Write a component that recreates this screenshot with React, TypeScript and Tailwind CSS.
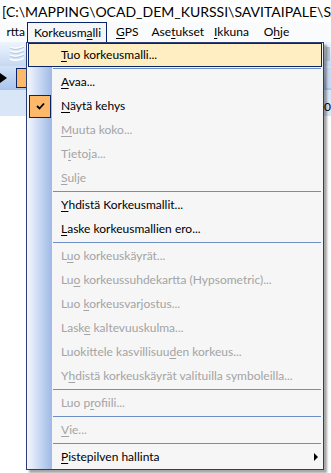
import React from 'react';

type MenuItem =
  | { sep: true }
  | {
      sep?: false;
      label: string;
      u: number;
      disabled?: boolean;
      checked?: boolean;
      active?: boolean;
      submenu?: boolean;
    };

const items: MenuItem[] = [
  { label: 'Tuo korkeusmalli...', u: 0, active: true },
  { sep: true },
  { label: 'Avaa...', u: 0 },
  { label: 'Näytä kehys', u: 0, checked: true },
  { label: 'Muuta koko...', u: 0, disabled: true },
  { label: 'Tietoja...', u: 1, disabled: true },
  { label: 'Sulje', u: 0, disabled: true },
  { sep: true },
  { label: 'Yhdistä Korkeusmallit...', u: 0 },
  { label: 'Laske korkeusmallien ero...', u: 0 },
  { sep: true },
  { label: 'Luo korkeuskäyrät...', u: 1, disabled: true },
  { label: 'Luo korkeussuhdekartta (Hypsometric)...', u: 2, disabled: true },
  { label: 'Luo korkeusvarjostus...', u: 4, disabled: true },
  { label: 'Laske kaltevuuskulma...', u: 4, disabled: true },
  { label: 'Luokittele kasvillisuuden korkeus...', u: 22, disabled: true },
  { label: 'Yhdistä korkeuskäyrät valituilla symboleilla...', u: 1, disabled: true },
  { sep: true },
  { label: 'Luo profiili...', u: 5, disabled: true },
  { sep: true },
  { label: 'Vie...', u: 0, disabled: true },
  { sep: true },
  { label: 'Pistepilven hallinta', u: 0, submenu: true },
];

// underline the access key letter
function Mnemonic({ text, u }: { text: string; u: number }) {
  return (
    <span>
      {text.slice(0, u)}
      <span className="underline decoration-1 underline-offset-[2px]">{text.charAt(u)}</span>
      {text.slice(u + 1)}
    </span>
  );
}

function MenuRow({ item }: { item: Exclude<MenuItem, { sep: true }> }) {
  if (item.active) {
    return (
      <div className="ml-[1px] mr-[1px] flex h-[24px] items-center border border-[#0a246a] bg-[#ffeec2] pl-[32px] text-black">
        <Mnemonic text={item.label} u={item.u} />
      </div>
    );
  }
  return (
    <div className={`flex h-[24px] items-center ${item.disabled ? 'text-[#a4a4a4]' : 'text-black'}`}>
      <div className="flex h-[24px] w-[34px] shrink-0 items-center">
        {item.checked && (
          <div className="ml-[2px] flex h-[23px] w-[22px] items-center justify-center border border-[#0a246a] bg-[#fdb86a]">
            <svg width="9" height="8" viewBox="0 0 9 8">
              <path d="M1 4 L3.5 6.5 L8 1.5" fill="none" stroke="#000" strokeWidth="1.8" />
            </svg>
          </div>
        )}
      </div>
      <Mnemonic text={item.label} u={item.u} />
      {item.submenu && (
        <div className="ml-auto mr-[5px] h-0 w-0 border-y-[4px] border-l-[4px] border-y-transparent border-l-black" />
      )}
    </div>
  );
}

export default function App() {
  return (
    <div
      className="relative h-[473px] w-[331px] overflow-hidden bg-white text-[12px]"
      style={{ fontFamily: 'Lato, "Open Sans", sans-serif' }}
    >
      {/* title bar */}
      <div className="flex h-[22px] items-center whitespace-nowrap pl-[2px] text-[14px] text-black">
        [C:\MAPPING\OCAD_DEM_KURSSI\SAVITAIPALE\SAVITAIPALE.ocd
      </div>

      {/* menu bar */}
      <div className="flex h-[20px] items-stretch whitespace-nowrap bg-[#fafbfd] text-black">
        <div className="flex w-[27px] items-center justify-end pr-[2px]">rtta</div>
        <div className="flex w-[80px] items-center border-x border-t border-[#0a246a] bg-[#f6f6f6] pl-[6px]">
          <Mnemonic text="Korkeusmalli" u={8} />
        </div>
        <div className="flex items-center pl-[9px]">
          <Mnemonic text="GPS" u={0} />
        </div>
        <div className="flex items-center pl-[13px]">
          <Mnemonic text="Asetukset" u={3} />
        </div>
        <div className="flex items-center pl-[10px]">
          <Mnemonic text="Ikkuna" u={0} />
        </div>
        <div className="flex items-center pl-[15px]">
          <Mnemonic text="Ohje" u={1} />
        </div>
      </div>

      {/* toolbars behind the menu */}
      <div className="flex h-[24px] items-center justify-between bg-[linear-gradient(to_bottom,#eef4fd,#c6d8f3)]">
        <svg width="26" height="22" viewBox="0 0 26 22">
          <path d="M10 4 C14 6 18 6 24 3 M10 8 C14 10 18 10 24 7 M10 12 C14 14 18 14 24 11 M10 16 C14 18 18 18 24 15" fill="none" stroke="#ffffff" strokeWidth="1.6" />
          <path d="M10 5 C14 7 18 7 24 4 M10 9 C14 11 18 11 24 8 M10 13 C14 15 18 15 24 12" fill="none" stroke="#9fb2cc" strokeWidth="0.7" />
        </svg>
        <div className="mr-[1px] h-[14px] w-[4px] bg-[#b8c0cc]" />
      </div>
      <div className="flex h-[24px] items-center justify-between bg-[linear-gradient(to_bottom,#d3e2f7,#a9c4ec)]">
        <div className="flex items-center">
          <div className="h-0 w-0 border-y-[5px] border-l-[7px] border-y-transparent border-l-black" />
          <div className="ml-[9px] h-[20px] w-[12px] border border-[#0a246a] bg-[#fdb86a]" />
        </div>
        <div className="h-[20px] w-[5px] bg-[#c8d8f0]" />
      </div>
      <div className="flex h-[26px] items-end justify-end bg-[#d9e6f8] pb-[2px]">
        <span className="text-[12px] leading-[14px] text-black">0</span>
      </div>

      {/* Korkeusmalli dropdown */}
      <div className="absolute left-[26px] top-[42px] w-[298px] border border-[#2b3e78] bg-[linear-gradient(to_right,#f4f7fd_0px,#9ebae7_25px,#f6f6f6_25px)] shadow-[3px_3px_2px_rgba(0,0,0,0.35)]">
        {items.map((item, i) =>
          item.sep ? (
            <div key={i} className="flex h-[3px] items-center pl-[26px] pr-[2px]">
              <div className="h-px w-full bg-[#6e8ec6]" />
            </div>
          ) : (
            <MenuRow key={i} item={item} />
          )
        )}
      </div>
    </div>
  );
}
